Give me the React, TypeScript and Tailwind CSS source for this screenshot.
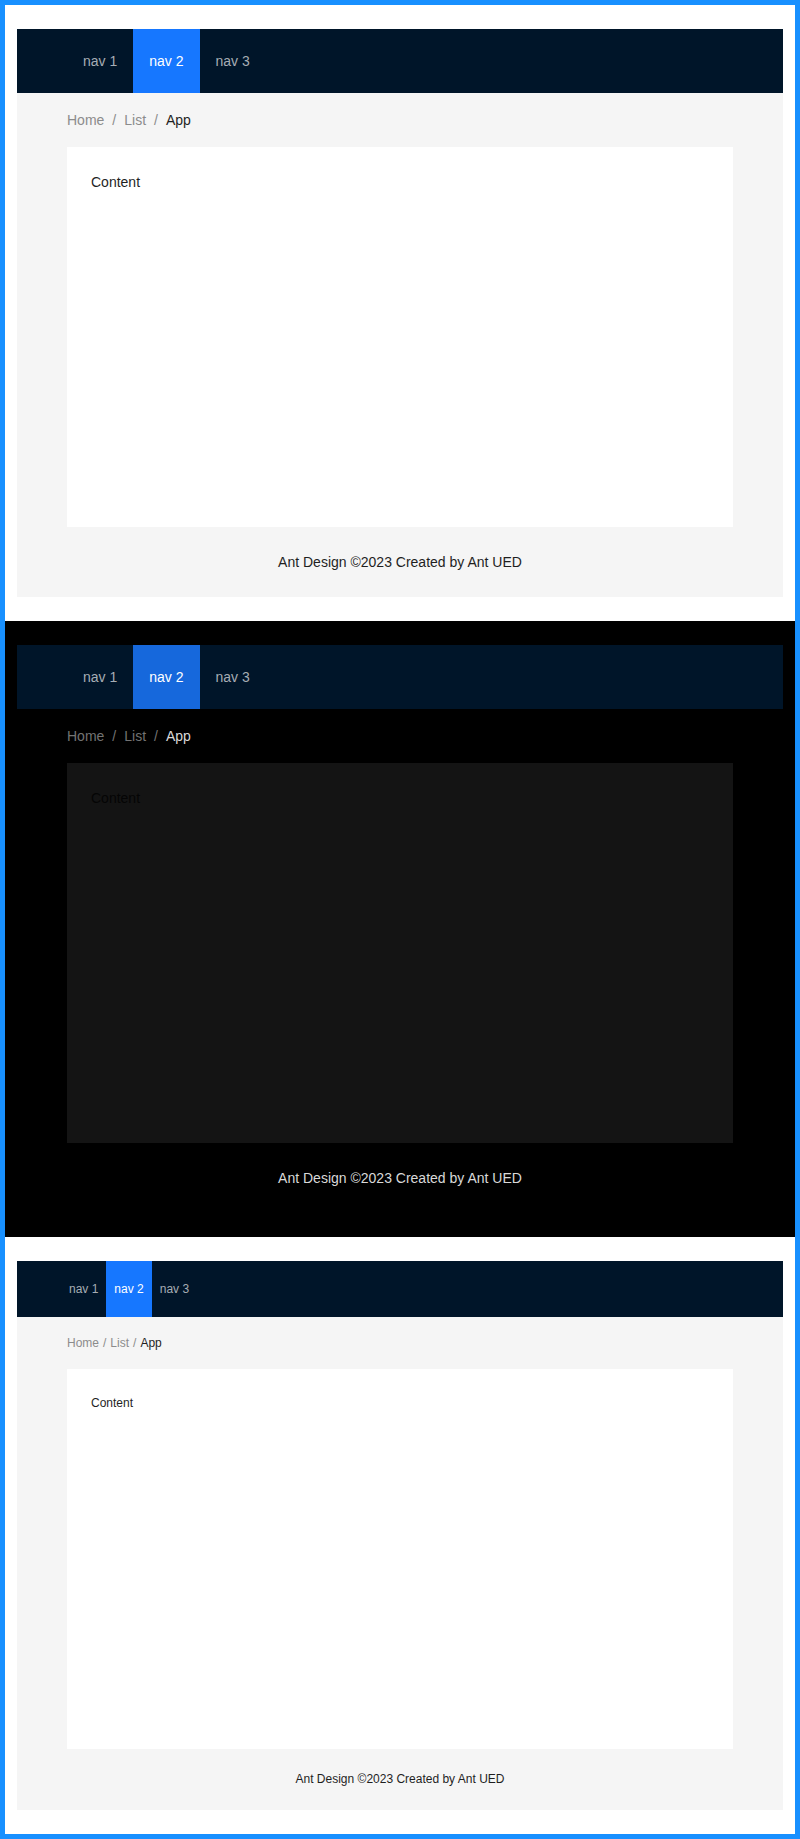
import React from "react";

type Theme = "light" | "dark" | "small";

function Section({ theme }: { theme: Theme }) {
  const dark = theme === "dark";
  const small = theme === "small";
  const navs = ["nav 1", "nav 2", "nav 3"];
  return (
    <div className={dark ? "bg-black px-3 py-6" : "bg-white px-3 py-6"}>
      <div className={dark ? "bg-black flex flex-col" : "bg-[#f5f5f5] flex flex-col"}>
        <header
          className={
            small
              ? "h-14 bg-[#001529] flex pl-[44px]"
              : "h-16 bg-[#001529] flex pl-[50px]"
          }
        >
          {navs.map((n, i) => {
            const sel = i === 1;
            const selBg = dark ? "bg-[#1668dc]" : "bg-[#1677ff]";
            return (
              <div
                key={n}
                className={
                  (small ? "px-2 text-[12px] " : "px-4 text-[14px] ") +
                  "flex items-center " +
                  (sel ? selBg + " text-white" : "text-[#a6adb4]")
                }
              >
                {n}
              </div>
            );
          })}
        </header>
        <div className="px-[50px]">
          <div
            className={
              (small ? "my-4 text-[12px] leading-5 " : "my-4 text-[14px] leading-[22px] ") +
              "flex"
            }
          >
            <span className={dark ? "text-[#737373]" : "text-[#8c8c8c]"}>Home</span>
            <span className={(small ? "mx-1 " : "mx-2 ") + (dark ? "text-[#737373]" : "text-[#8c8c8c]")}>/</span>
            <span className={dark ? "text-[#737373]" : "text-[#8c8c8c]"}>List</span>
            <span className={(small ? "mx-1 " : "mx-2 ") + (dark ? "text-[#737373]" : "text-[#8c8c8c]")}>/</span>
            <span className={dark ? "text-[#d9d9d9]" : "text-[#1f1f1f]"}>App</span>
          </div>
          <div
            className={
              (dark ? "bg-[#141414] text-[#050505] " : "bg-white text-[#1f1f1f] ") +
              "h-[380px] p-6 " +
              (small ? "text-[12px] leading-5" : "text-[14px] leading-[22px]")
            }
          >
            Content
          </div>
        </div>
        <footer
          className={
            (small ? "pt-5 pb-[21px] text-[12px] leading-5 " : "py-6 text-[14px] leading-[22px] ") +
            "text-center " +
            (dark ? "text-[#d9d9d9]" : "text-[#1f1f1f]")
          }
        >
          Ant Design ©2023 Created by Ant UED
        </footer>
      </div>
    </div>
  );
}

export default function App() {
  return (
    <div
      className="border-[5px] border-[#1890ff] bg-white"
      style={{ fontFamily: '"Liberation Sans", Arial, sans-serif' }}
    >
      <Section theme="light" />
      <Section theme="dark" />
      <Section theme="small" />
    </div>
  );
}
